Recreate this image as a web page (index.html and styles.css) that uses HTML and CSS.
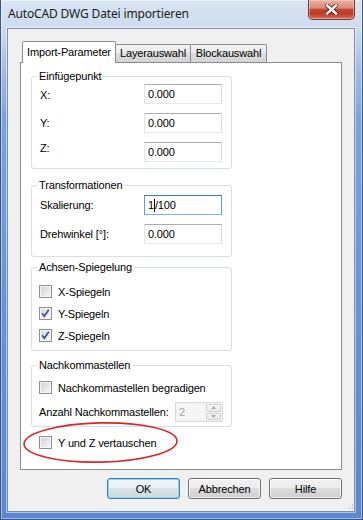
FILE: index.html
```html
<!DOCTYPE html>
<html lang="de">
<head>
    <meta charset="UTF-8">
    <title>AutoCAD DWG Datei importieren</title>
    <link rel="stylesheet" href="styles.css">
</head>
<body>

<div class="window">
    <div class="titlebar">
        <span class="title">AutoCAD DWG Datei importieren</span>
        <div class="close">
            <svg width="13" height="11" viewBox="0 0 13 11">
                <path d="M2 1.5 L11 9.5 M11 1.5 L2 9.5" stroke="#4a2620" stroke-width="4.2" stroke-linecap="square"/>
                <path d="M2 1.5 L11 9.5 M11 1.5 L2 9.5" stroke="#fff" stroke-width="2.4" stroke-linecap="square"/>
            </svg>
        </div>
    </div>

    <div class="client">
        <div class="tabs">
            <div class="tab active">Import-Parameter</div>
            <div class="tab layer">Layerauswahl</div>
            <div class="tab block">Blockauswahl</div>
        </div>

        <div class="panel">
            <fieldset class="group g-insert">
                <legend>Einfügepunkt</legend>
                <div class="fields">
                    <label class="lbl-x">X:</label>
                    <div class="textbox">0.000</div>
                    <label>Y:</label>
                    <div class="textbox">0.000</div>
                    <label class="lbl-z">Z:</label>
                    <div class="textbox">0.000</div>
                </div>
            </fieldset>

            <fieldset class="group g-trans">
                <legend>Transformationen</legend>
                <div class="fields">
                    <label>Skalierung:</label>
                    <div class="textbox focus">1<span class="caret"></span>/100</div>
                    <label>Drehwinkel [°]:</label>
                    <div class="textbox">0.000</div>
                </div>
            </fieldset>

            <fieldset class="group g-mirror">
                <legend>Achsen-Spiegelung</legend>
                <div class="checks">
                    <div class="check"><span class="cb"></span>X-Spiegeln</div>
                    <div class="check"><span class="cb checked"><svg width="11" height="11" viewBox="0 0 11 11"><path d="M2.2 5.2 L4.3 8.2 L8.8 1.8" fill="none" stroke="#3f4f90" stroke-width="1.7"/></svg></span>Y-Spiegeln</div>
                    <div class="check"><span class="cb checked"><svg width="11" height="11" viewBox="0 0 11 11"><path d="M2.2 5.2 L4.3 8.2 L8.8 1.8" fill="none" stroke="#3f4f90" stroke-width="1.7"/></svg></span>Z-Spiegeln</div>
                </div>
            </fieldset>

            <fieldset class="group g-decimals">
                <legend>Nachkommastellen</legend>
                <div class="check"><span class="cb"></span>Nachkommastellen begradigen</div>
                <div class="spin-row">
                    <span>Anzahl Nachkommastellen:</span>
                    <div class="spin">
                        <span class="spin-value">2</span>
                        <div class="spin-buttons">
                            <div class="spin-btn"><svg width="5" height="3" viewBox="0 0 5 3"><path d="M0 3 L2.5 0 L5 3 Z" fill="#a9a9a9"/></svg></div>
                            <div class="spin-btn"><svg width="5" height="3" viewBox="0 0 5 3"><path d="M0 0 L2.5 3 L5 0 Z" fill="#a9a9a9"/></svg></div>
                        </div>
                    </div>
                </div>
            </fieldset>

            <div class="check swap"><span class="cb"></span>Y und Z vertauschen</div>

            <!-- red marker drawn over the dialog -->
            <svg class="marker" width="158" height="44" viewBox="0 0 158 44">
                <ellipse cx="78.5" cy="21.5" rx="76.5" ry="19.6" fill="none" stroke="#d8262a" stroke-width="1.6" transform="rotate(-1.2 78.5 21.5)"/>
            </svg>
        </div>

        <div class="footer">
            <div class="buttons">
                <button class="btn default">OK</button>
                <button class="btn">Abbrechen</button>
                <button class="btn">Hilfe</button>
            </div>
            <svg class="grip" width="7" height="7" viewBox="0 0 7 7">
                <rect x="5" y="0" width="1" height="1" fill="#b3b7bd"/>
                <rect x="3" y="2" width="1" height="1" fill="#b3b7bd"/>
                <rect x="5" y="2" width="1" height="1" fill="#b3b7bd"/>
                <rect x="1" y="4" width="1" height="1" fill="#b3b7bd"/>
                <rect x="3" y="4" width="1" height="1" fill="#b3b7bd"/>
                <rect x="5" y="4" width="1" height="1" fill="#b3b7bd"/>
                <rect x="6" y="1" width="1" height="1" fill="#fff"/>
                <rect x="4" y="3" width="1" height="1" fill="#fff"/>
                <rect x="6" y="3" width="1" height="1" fill="#fff"/>
                <rect x="2" y="5" width="1" height="1" fill="#fff"/>
                <rect x="4" y="5" width="1" height="1" fill="#fff"/>
                <rect x="6" y="5" width="1" height="1" fill="#fff"/>
            </svg>
        </div>
    </div>
</div>

</body>
</html>
```

FILE: styles.css
```css
* {
    box-sizing: border-box;
}
body {
    margin: 0;
    font-family: "Liberation Sans", Arial, sans-serif;
    font-size: 11px;
    letter-spacing: -0.15px;
    color: #000;
    background: #fff;
}

/* window frame */
.window {
    width: 363px;
    height: 520px;
    display: flex;
    flex-direction: column;
    padding: 0 7px 7px 6px;
    border: 1px solid #3a557e;
    border-top: none;
    background: linear-gradient(180deg, #d9e4f2 0px, #cddbee 30px, #a8c1e6 62px, #7ca2db 120px, #6893d4 300px, #5a87cf 520px);
    box-shadow: inset 0 0 0 1px rgba(255,255,255,0.45);
}
.titlebar {
    flex: none;
    height: 28px;
    display: flex;
    justify-content: space-between;
    align-items: flex-start;
}
.title {
    font-family: "Noto Sans", sans-serif;
    font-size: 12px;
    line-height: 16px;
    letter-spacing: -0.15px;
    padding: 6px 0 0 1px;
    color: #1b1b1b;
}
.close {
    width: 47px;
    height: 20px;
    display: flex;
    align-items: center;
    justify-content: center;
    border: 1px solid #7b3a30;
    border-top: none;
    border-radius: 0 0 5px 5px;
    background: linear-gradient(180deg, #eab1a3 0%, #db8c79 42%, #c24a35 50%, #c03a26 72%, #d7735a 100%);
    box-shadow: inset 0 0 0 1px rgba(255,220,210,0.45);
}

/* client area */
.client {
    flex: 1;
    display: flex;
    flex-direction: column;
    background: #f0f0f0;
    border: 1px solid #7c8fa9;
    padding: 12px 0 0 12px;
    box-shadow: 0 0 0 1px rgba(255,255,255,0.5);
}
.tabs {
    display: flex;
    align-items: flex-end;
    height: 21px;
    margin-left: 2px;
}
.tab {
    height: 18px;
    margin-left: -1px;
    border: 1px solid #898c95;
    border-bottom: none;
    border-radius: 2px 2px 0 0;
    background: linear-gradient(180deg, #f3f3f3 0%, #ebebeb 50%, #dedede 50%, #d3d3d3 100%);
    text-align: center;
    line-height: 17px;
    white-space: nowrap;
}
.tab.active {
    width: 94px;
    height: 22px;
    margin: 0 0 -1px 0;
    background: #fff;
    line-height: 20px;
    position: relative;
    z-index: 1;
}
.tab.layer {
    width: 76px;
}
.tab.block {
    width: 77px;
}
.panel {
    flex: none;
    width: 322px;
    height: 408px;
    border: 1px solid #898c95;
    background: #fff;
    padding: 7px 0 0 10px;
    position: relative;
}

/* group boxes */
.group {
    width: 201px;
    min-width: 0;
    margin: 0;
    padding: 0 0 0 8px;
    border: 1px solid #d5dfe5;
    border-radius: 3px;
}
.group legend {
    padding: 0 2px;
    margin-left: -3px;
    line-height: 13px;
}
.g-insert {
    padding-top: 1px;
    padding-bottom: 6px;
}
.g-trans {
    margin-top: 10px;
    padding-top: 3px;
    padding-bottom: 12px;
}
.g-mirror {
    margin-top: 4px;
    padding-top: 11px;
    padding-bottom: 8px;
}
.g-decimals {
    margin-top: 8px;
    padding-top: 9px;
    padding-bottom: 4px;
}
.fields {
    display: grid;
    grid-template-columns: 104px 78px;
    row-gap: 9px;
    align-items: center;
}
.lbl-x {
    padding-top: 2px;
}
.lbl-z {
    margin-top: -8px;
}
.textbox {
    height: 20px;
    border: 1px solid;
    border-color: #abadb3 #dbdfe6 #e3e9ef #e2e3ea;
    background: #fff;
    padding-left: 3px;
    line-height: 18px;
}
.textbox.focus {
    border-color: #3d7bad #5d9bd8 #7db2e4 #5d9bd8;
}
.caret {
    display: inline-block;
    width: 1px;
    height: 13px;
    background: #000;
    vertical-align: -3px;
}

/* check boxes */
.checks {
    display: flex;
    flex-direction: column;
    gap: 9px;
}
.check {
    display: flex;
    align-items: center;
    gap: 6px;
    height: 13px;
    margin-left: -1px;
    white-space: nowrap;
}
.cb {
    width: 13px;
    height: 13px;
    flex: none;
    display: flex;
    align-items: center;
    justify-content: center;
    border: 1px solid #8e8f8f;
    background: linear-gradient(135deg, #c9cdd2 0%, #e6e7e9 55%, #f7f7f7 100%);
    box-shadow: inset 0 0 0 1px #f6f6f6;
}
.cb.checked {
    background: linear-gradient(135deg, #d3d6da 0%, #ececee 55%, #fafafa 100%);
}
.spin-row {
    display: flex;
    align-items: center;
    justify-content: space-between;
    width: 184px;
    margin: 8px 0 0 -1px;
}
.spin {
    display: flex;
    width: 48px;
    height: 20px;
    border: 1px solid #d9d9d9;
    background: #f4f4f4;
}
.spin-value {
    flex: 1;
    padding-left: 3px;
    line-height: 18px;
    color: #a3a3a3;
}
.spin-buttons {
    width: 16px;
    display: flex;
    flex-direction: column;
    padding: 1px 1px 1px 0;
    gap: 1px;
}
.spin-btn {
    flex: 1;
    display: flex;
    align-items: center;
    justify-content: center;
    border: 1px solid #d2d2d2;
    border-radius: 2px;
    background: linear-gradient(180deg, #f6f6f6, #e9e9e9);
}
.swap {
    margin: 9px 0 0 8px;
}
.marker {
    position: absolute;
    left: 1px;
    top: 358px;
}

/* buttons */
.footer {
    flex: 1;
    display: flex;
    padding-top: 8px;
}
.buttons {
    width: 322px;
    display: flex;
    justify-content: flex-end;
    align-items: flex-start;
    gap: 8px;
}
.btn {
    width: 73px;
    height: 21px;
    padding: 0;
    border: 1px solid #707070;
    border-radius: 3px;
    background: linear-gradient(180deg, #f2f2f2 0%, #ebebeb 50%, #dddddd 50%, #cfcfcf 100%);
    box-shadow: inset 0 0 0 1px rgba(255,255,255,0.75);
    font-family: "Liberation Sans", Arial, sans-serif;
    font-size: 11px;
    letter-spacing: -0.15px;
    color: #000;
}
.btn.default {
    border-color: #3c7fb1;
    background: linear-gradient(180deg, #f1f6f9 0%, #e9eff3 50%, #dbe3e8 50%, #cfd8de 100%);
    box-shadow: inset 0 0 0 1px #8fd3f2;
}
.grip {
    margin-left: auto;
    align-self: flex-end;
}
```
